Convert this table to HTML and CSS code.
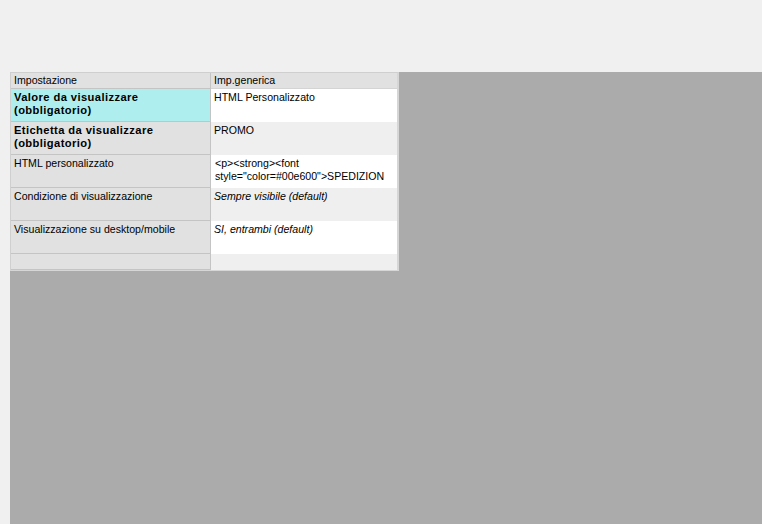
FILE: index.html
```html
<!DOCTYPE html>
<html>
<head>
<meta charset="utf-8">
<link rel="stylesheet" href="styles.css">
</head>
<body>
<div class="workspace">
  <div class="grid">
    <div class="cell key head">Impostazione</div>
    <div class="cell val head">Imp.generica</div>

    <div class="cell key bold selected">Valore da visualizzare<br>(obbligatorio)</div>
    <div class="cell val">HTML Personalizzato</div>

    <div class="cell key bold">Etichetta da visualizzare<br>(obbligatorio)</div>
    <div class="cell val alt">PROMO</div>

    <div class="cell key">HTML personalizzato</div>
    <div class="cell val code">&lt;p&gt;&lt;strong&gt;&lt;font style="color=#00e600"&gt;SPEDIZION</div>

    <div class="cell key">Condizione di visualizzazione</div>
    <div class="cell val alt italic">Sempre visibile (default)</div>

    <div class="cell key">Visualizzazione su desktop/mobile</div>
    <div class="cell val italic">SI, entrambi (default)</div>

    <div class="cell key short"></div>
    <div class="cell val alt short"></div>
  </div>
</div>
</body>
</html>
```

FILE: styles.css
```css
html, body {
  margin: 0;
  padding: 0;
  background: #f0f0f0;
  font-family: "Liberation Sans", Arial, sans-serif;
  font-size: 10.6px;
  color: #000;
}

.workspace {
  margin: 72px 0 0 10px;
  height: 452px;
  background: #ababab;
}

.grid {
  display: grid;
  grid-template-columns: 200px 186px;
  grid-template-rows: 16px repeat(5, 33px) 16px;
  width: 386px;
  border-top: 1px solid #cfcfcf;
  border-left: 1px solid #cfcfcf;
  border-right: 2px solid #d6d6d6;
  border-bottom: 1px solid #d6d6d6;
  background: #fff;
}

.cell {
  box-sizing: border-box;
  padding: 2px 3px 0 3px;
  line-height: 13px;
  overflow: hidden;
}

.key {
  background: #e1e1e1;
  border-right: 1px solid #c4c4c4;
  border-bottom: 1px solid #c4c4c4;
}

.head {
  padding-top: 1px;
}

.val.head {
  background: #e1e1e1;
  border-bottom: 1px solid #d4d4d4;
}

.val {
  background: #ffffff;
}

.val.alt {
  background: #efefef;
}

.key.selected {
  background: #afeeee;
}

.bold {
  font-weight: bold;
  font-size: 11.2px;
  letter-spacing: 0.4px;
}

.italic {
  font-style: italic;
}

.code {
  padding-left: 4px;
  overflow-wrap: normal;
  word-break: keep-all;
}
```
